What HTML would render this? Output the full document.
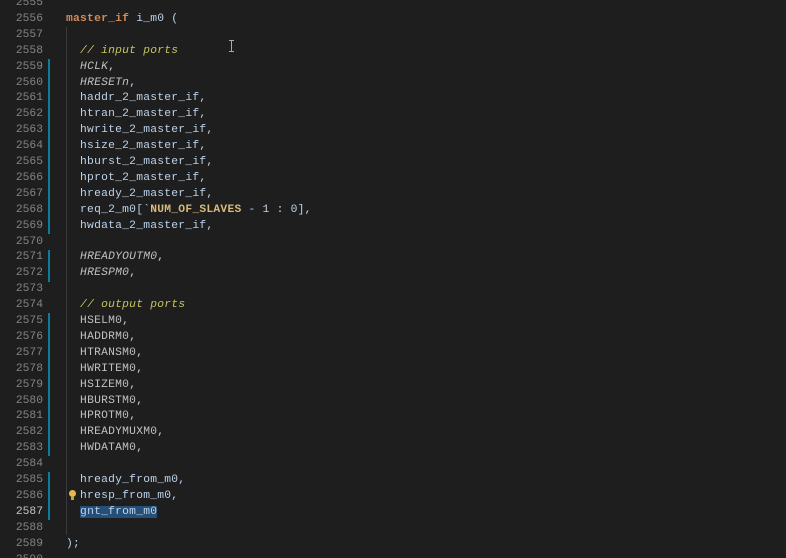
<!DOCTYPE html>
<html><head><meta charset="utf-8"><style>
html,body{margin:0;padding:0;background:#1e1e1e;width:786px;height:558px;overflow:hidden}
.ed{position:relative;width:786px;height:558px;font-family:"Liberation Mono","DejaVu Sans Mono",monospace;font-size:11.3px}
.l{position:absolute;left:0;height:15.9px;line-height:15.9px;white-space:pre;width:786px}
.n{position:absolute;right:743px;color:#858585;text-align:right}
.n.cur{color:#c6c6c6}
.c{position:absolute;left:66px;color:#bcd3ea;letter-spacing:0.24px}
.bar{position:absolute;left:48px;width:2px;background:#0c7d9d}
.k{color:#d38a5b;font-weight:bold}
.cm{color:#c9c45e;font-style:italic}
.u{color:#c0c0c0}
.i{color:#c0c0c0;font-style:italic}
.m{color:#d7ba7d;font-weight:bold}
.sel{background:#264f78}
.guide{position:absolute;left:66px;width:1px;background:#3a3a3a}
</style></head><body><div class="ed">
<div class="guide" style="top:27px;height:508px"></div>
<div class="bar" style="top:59px;height:175px"></div>
<div class="bar" style="top:250px;height:32px"></div>
<div class="bar" style="top:313px;height:143px"></div>
<div class="bar" style="top:472px;height:48px"></div>
<div style="position:absolute;left:231px;top:40px;width:1px;height:12px;background:#aaa"></div>
<div style="position:absolute;left:229px;top:40px;width:5px;height:1px;background:#aaa"></div>
<div style="position:absolute;left:229px;top:51px;width:5px;height:1px;background:#aaa"></div>
<div style="position:absolute;left:69px;top:490px;width:7px;height:7px;border-radius:50%;background:#e4b84a"></div>
<div style="position:absolute;left:71px;top:497px;width:3px;height:3px;background:#c9a03a"></div>
<script>
var L=[
["2555",""],
["2556","<span class=k>master_if</span> i_m0 ("],
["2557",""],
["2558","  <span class=cm>// input ports</span>"],
["2559","  <span class=i>HCLK</span>,"],
["2560","  <span class=i>HRESETn</span>,"],
["2561","  haddr_2_master_if,"],
["2562","  htran_2_master_if,"],
["2563","  hwrite_2_master_if,"],
["2564","  hsize_2_master_if,"],
["2565","  hburst_2_master_if,"],
["2566","  hprot_2_master_if,"],
["2567","  hready_2_master_if,"],
["2568","  req_2_m0[`<span class=m>NUM_OF_SLAVES</span> - 1 : 0],"],
["2569","  hwdata_2_master_if,"],
["2570",""],
["2571","  <span class=i>HREADYOUTM0</span>,"],
["2572","  <span class=i>HRESPM0</span>,"],
["2573",""],
["2574","  <span class=cm>// output ports</span>"],
["2575","  <span class=u>HSELM0</span>,"],
["2576","  <span class=u>HADDRM0</span>,"],
["2577","  <span class=u>HTRANSM0</span>,"],
["2578","  <span class=u>HWRITEM0</span>,"],
["2579","  <span class=u>HSIZEM0</span>,"],
["2580","  <span class=u>HBURSTM0</span>,"],
["2581","  <span class=u>HPROTM0</span>,"],
["2582","  <span class=u>HREADYMUXM0</span>,"],
["2583","  <span class=u>HWDATAM0</span>,"],
["2584",""],
["2585","  hready_from_m0,"],
["2586","  hresp_from_m0,"],
["2587","  <span class=sel>gnt_from_m0</span>"],
["2588",""],
["2589",");"],
["2590",""]];
var h="";
for(var j=0;j<L.length;j++){var t=-4+j*15.9;
h+='<div class="l" style="top:'+t+'px"><span class="n'+(L[j][0]=="2587"?" cur":"")+'">'+L[j][0]+'</span><span class="c">'+L[j][1]+'</span></div>';}
document.write(h);
</script>
</div></body></html>
